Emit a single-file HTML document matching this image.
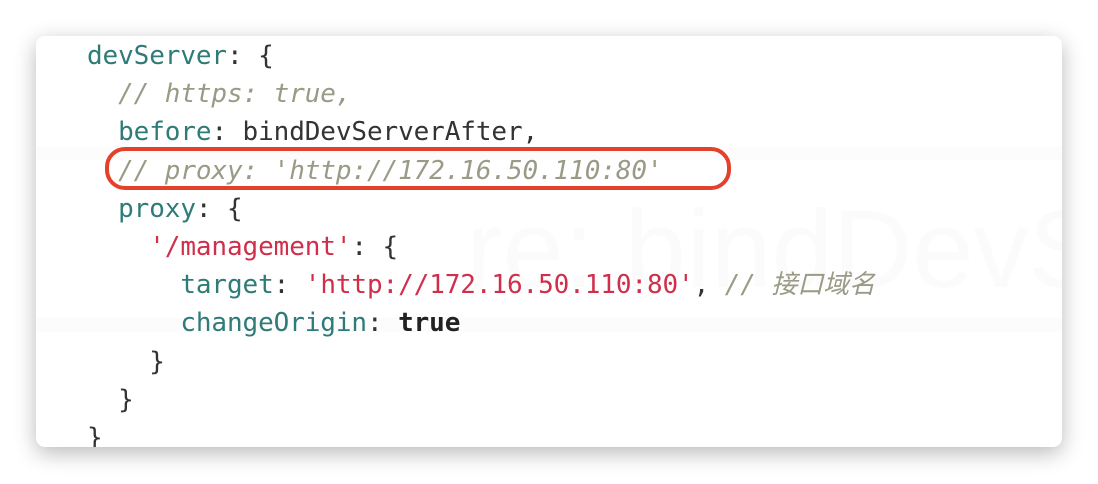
<!DOCTYPE html>
<html><head><meta charset="utf-8"><style>
html,body{margin:0;padding:0;background:#fff;width:1098px;height:484px;overflow:hidden}
.card{position:absolute;left:36px;top:36px;width:1026px;height:411px;background:#fff;border-radius:9px;box-shadow:0 6px 22px rgba(0,0,0,0.28);overflow:hidden}
pre{position:absolute;left:51px;top:1px;margin:0;font-family:"DejaVu Sans Mono","Liberation Mono","Noto Sans CJK SC",monospace;font-size:26px;line-height:38.2px;color:#333;letter-spacing:-0.1px}
.k{color:#2e7b78}.c{color:#9a9a86;font-style:italic}.s{color:#cf2f4a}.b{font-weight:bold;color:#222}
.ring{position:absolute;left:69px;top:111px;width:618px;height:35px;border:4px solid #e4412a;border-radius:20px}
.wm{position:absolute;left:430px;top:150px;font-family:"Liberation Sans",sans-serif;font-size:110px;color:#fbfbfb;white-space:nowrap}
.band{position:absolute;left:0;width:1026px;height:14px;background:#fcfcfc}
</style></head><body>
<div class="card">
<div class="band" style="top:110px"></div>
<div class="band" style="top:282px"></div>
<div class="wm">re: bindDevSe</div>
<pre><span class="k">devServer</span>: {
  <span class="c">// https: true,</span>
  <span class="k">before</span>: bindDevServerAfter,
  <span class="c">// proxy: 'http://172.16.50.110:80'</span>
  <span class="k">proxy</span>: {
    <span class="s">'/management'</span>: {
      <span class="k">target</span>: <span class="s">'http://172.16.50.110:80'</span>, <span class="c">// 接口域名</span>
      <span class="k">changeOrigin</span>: <span class="b">true</span>
    }
  }
}</pre>
<div class="ring"></div>
</div>
</body></html>
